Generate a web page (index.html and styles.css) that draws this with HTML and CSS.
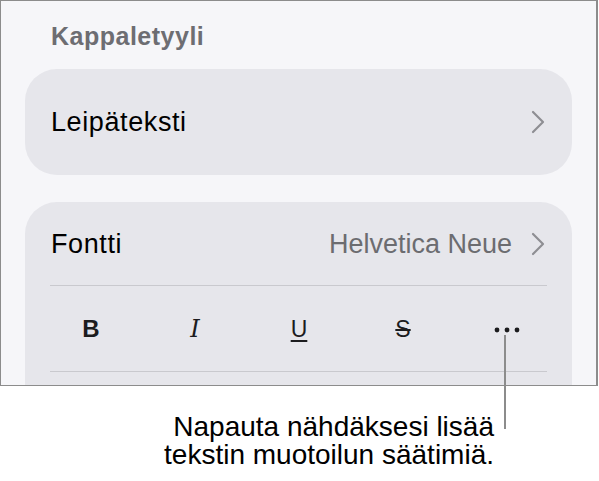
FILE: index.html
```html
<!DOCTYPE html>
<html lang="fi">
<head>
<meta charset="utf-8">
<link rel="stylesheet" href="styles.css">
</head>
<body>
<div class="frame">
  <div class="heading">Kappaletyyli</div>
  <div class="card single">
    <span class="label">Leipäteksti</span>
    <svg class="chev" width="14" height="24" viewBox="0 0 14 24"><path d="M2 2 L12 12 L2 22" fill="none" stroke="#8e8e93" stroke-width="2.2" stroke-linecap="round" stroke-linejoin="round"/></svg>
  </div>
  <div class="card multi">
    <div class="row">
      <span class="label">Fontti</span>
      <span class="value">Helvetica Neue</span>
      <svg class="chev" width="14" height="24" viewBox="0 0 14 24"><path d="M2 2 L12 12 L2 22" fill="none" stroke="#8e8e93" stroke-width="2.2" stroke-linecap="round" stroke-linejoin="round"/></svg>
    </div>
    <div class="sep"></div>
    <div class="toolbar">
      <span class="tool bold">B</span>
      <span class="tool italic">I</span>
      <span class="tool under">U</span>
      <span class="tool strike">S</span>
      <span class="tool more"><svg width="26" height="6" viewBox="0 0 26 6"><circle cx="3" cy="3" r="2.4" fill="#1c1c1e"/><circle cx="13" cy="3" r="2.4" fill="#1c1c1e"/><circle cx="23" cy="3" r="2.4" fill="#1c1c1e"/></svg></span>
    </div>
    <div class="sep"></div>
  </div>
</div>
<div class="callout-line"></div>
<div class="callout">Napauta nähdäksesi lisää<br>tekstin muotoilun säätimiä.</div>
</body>
</html>
```

FILE: styles.css
```css
html, body {
  margin: 0;
  padding: 0;
  background: #ffffff;
}
body {
  width: 599px;
  height: 481px;
  position: relative;
  font-family: "Liberation Sans", Arial, sans-serif;
  overflow: hidden;
}
.frame {
  box-sizing: border-box;
  width: 598px;
  height: 386px;
  border: 1px solid #8c8c8c;
  border-right-width: 2px;
  background: #f6f6f9;
  padding: 20px 0 0 24px;
  overflow: hidden;
}
.heading {
  font-size: 25px;
  line-height: 30px;
  font-weight: bold;
  color: #6d6d72;
  padding-left: 26px;
  letter-spacing: 0.5px;
}
.card {
  box-sizing: border-box;
  width: 547px;
  background: #e6e6eb;
  border-radius: 32px;
}
.single {
  margin-top: 18px;
  height: 106px;
  display: flex;
  align-items: center;
  padding: 0 27px 0 26px;
}
.label {
  font-size: 27px;
  line-height: 32px;
  color: #000000;
  flex: 1;
  letter-spacing: 0.6px;
}
.chev {
  display: block;
  flex: none;
}
.multi {
  margin-top: 27px;
  height: 240px;
  padding: 0 25px;
}
.row {
  height: 83px;
  display: flex;
  align-items: center;
  padding-left: 1px;
  padding-right: 2px;
}
.value {
  font-size: 27px;
  line-height: 32px;
  color: #6c6c70;
  margin-right: 19px;
}
.sep {
  height: 1px;
  background: #c9c9ce;
}
.toolbar {
  height: 85px;
  display: flex;
  align-items: center;
  margin-left: -11px;
}
.tool {
  width: 104px;
  flex: none;
  text-align: center;
  font-size: 23px;
  line-height: 28px;
  color: #1c1c1e;
}
.bold {
  font-weight: bold;
  font-size: 24px;
}
.italic {
  font-family: "DejaVu Serif", "Liberation Serif", serif;
  font-style: italic;
  font-size: 24px;
}
.under {
  text-decoration: underline;
  text-decoration-thickness: 1.5px;
  text-underline-offset: 3px;
}
.strike {
  text-decoration: line-through;
  text-decoration-thickness: 1.5px;
}
.more svg {
  display: inline-block;
  vertical-align: middle;
}
.callout-line {
  position: absolute;
  left: 504px;
  top: 335px;
  width: 2px;
  height: 94px;
  background: #8c8c8c;
}
.callout {
  margin-top: 27px;
  width: 494px;
  text-align: right;
  font-size: 28px;
  line-height: 28px;
  color: #000000;
}
```
